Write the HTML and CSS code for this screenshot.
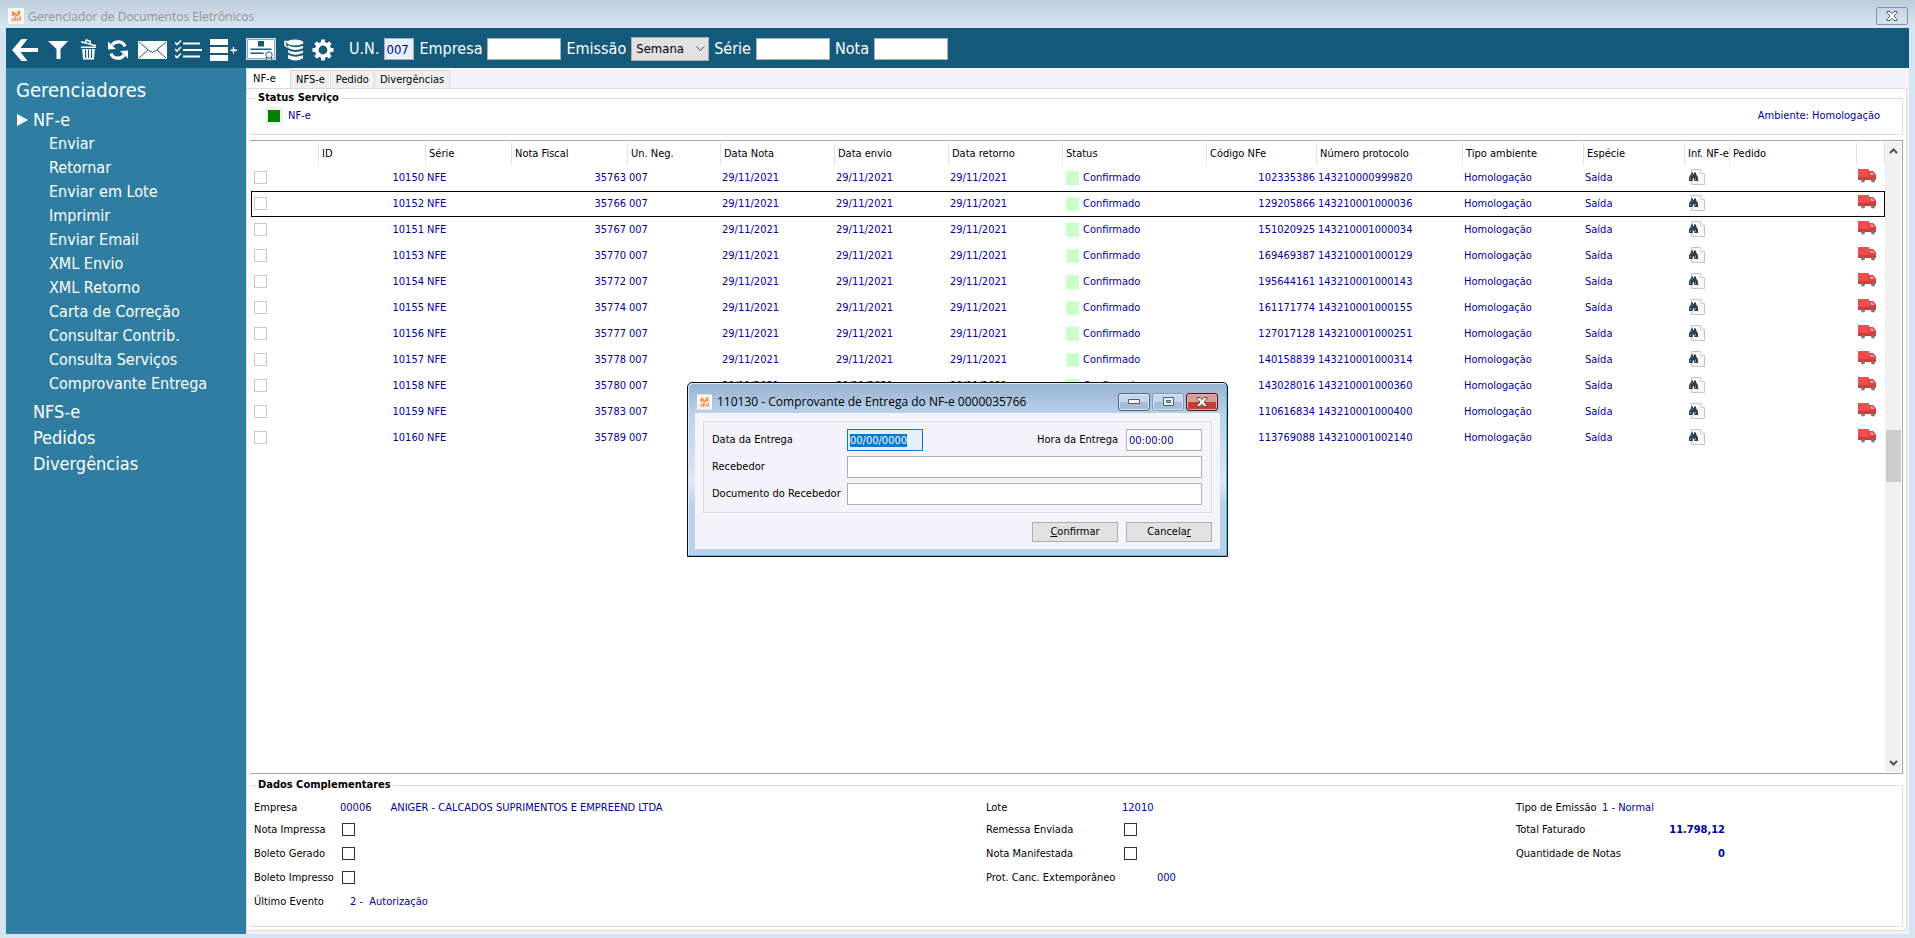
FILE: index.html
```html
<!DOCTYPE html>
<html lang="pt-BR">
<head>
<meta charset="utf-8">
<title>Gerenciador de Documentos Eletrônicos</title>
<link rel="stylesheet" href="styles.css">
</head>
<body>
<svg class="defs" aria-hidden="true">
  <symbol id="logo" viewBox="0 0 16 16"><rect width="16" height="16" fill="#fdf7f2"/><path d="M4 3.500l3 2.500M9 5.500l3-2.500M4 8l3-2 2 1.500 3-2M4.500 13V10.500M7 13V9.500l1.500-1M9.500 13V10M12 13V8.500M4 6l1.500-1M10 3.500l1.500 1.500" stroke="#f0762e" stroke-width="1.300" fill="none"/></symbol>
  <symbol id="doc" viewBox="0 0 17 17"><path d="M2.500 .5h9l4 4v11h-13z" fill="#f8f8fa" stroke="#c4c4c4"/><path d="M11.500 .5v4h4" fill="#fff" stroke="#d2d2d2"/><path d="M2 3.500h2v1.500h1V3.500h2V5l2 3.500V12H5.300V9.500h-1.600V12H0V8.500L2 5z" fill="#2d3a48"/><path d="M1.500 8.500v2.500M6.500 8.500v2.500M3 5v2" stroke="#7f93a6" stroke-width=".8"/></symbol>
  <symbol id="truck" viewBox="0 0 18 14"><path d="M0 0h11v9H0z" fill="#f04d4d"/><path d="M0 8h18v3H0z" fill="#cf3b3b"/><path d="M11 2h4l3 3.500V9h-7z" fill="#dc4040"/><path d="M12.500 3.500h2l1.800 2.500h-3.800z" fill="#f3a9a9"/><circle cx="5" cy="11.500" r="2" fill="#777"/><circle cx="15" cy="11.500" r="2" fill="#777"/></symbol>
</svg>

<header class="titlebar">
  <svg class="logo"><use href="#logo"/></svg>
  <h1>Gerenciador de Documentos Eletrônicos</h1>
  <button class="close-main" aria-label="Fechar"><svg width="12" height="10" viewBox="0 0 12 10"><path d="M1 .5h3l2 2.200 2-2.200h3v1L8 5l3 3.500v1H8L6 7.300 4 9.500H1v-1L4 5 1 1.500z" fill="#fff" stroke="#535a68"/></svg></button>
</header>

<div class="frame">
  <nav class="toolbar" aria-label="Ferramentas">
    <div class="tools">
      <button aria-label="Voltar"><svg width="26" height="22" viewBox="0 0 26 22"><path d="M9.500 0h6L8.500 9H26v4H8.500l7 9h-6L0 11z"/></svg></button>
      <button aria-label="Filtrar"><svg width="20" height="22" viewBox="0 0 20 22"><path d="M0 2h20l-7.500 8v10h-4V10z"/></svg></button>
      <button aria-label="Excluir"><svg width="20" height="22" viewBox="0 0 20 22"><path d="M3 7.500h15V9H3zM4.200 10h12.600l-.8 10.500H5z"/><path d="M3 2.800l15 4M7.500 3.500l.8-2.500 4 1.200-.5 2.500" fill="none" stroke="#fff" stroke-width="1.500"/><path d="M7.500 10.500v8.500M10.500 10.500v8.500M13.500 10.500v8.500" stroke="#145a7b" stroke-width="1.200"/></svg></button>
      <button aria-label="Atualizar"><svg width="20" height="22" viewBox="0 0 20 22"><path d="M17 7.500C15 1.500 7 1.500 4 6M3 14.500c2 6 10 6 13 1.500" fill="none" stroke="#fff" stroke-width="3.200"/><path d="M0 2.500v8l8-.5zM20 19.500v-8l-8 .5z"/></svg></button>
      <button aria-label="Enviar e-mail"><svg width="29" height="22" viewBox="0 0 29 22"><path d="M0 2h29v18H0z"/><path d="M1 3l10.500 9q3 2.500 6 0L28 3M1 19l9-8M28 19l-9-8" fill="none" stroke="#145a7b"/></svg></button>
    </div>
    <div class="tools narrow">
      <button aria-label="Conferir"><svg width="27" height="22" viewBox="0 0 27 22"><path d="M8 3.500h17v2H8zM8 10h19v2H8zM8 16.500h17v2H8z"/><path d="M0 3.500l2 2 4-4M0 10l2 2 4-4M0 16.500l2 2 4-4" fill="none" stroke="#fff" stroke-width="1.600"/></svg></button>
      <button aria-label="Adicionar"><svg width="28" height="22" viewBox="0 0 28 22"><path d="M0 0h18v6H0zM0 8h18v6H0zM0 16h18v6H0z"/><path d="M23.500 8v6.500M20.500 11.200h6.500" stroke="#fff" stroke-width="1.400"/></svg></button>
      <button aria-label="Certificado"><svg width="30" height="24" viewBox="0 0 30 24"><path d="M0 0h30v22H0z" fill="#d3e0e7"/><path d="M1.500 1.500h27v19h-27z" fill="#fff" stroke="#88aabc"/><path d="M12 3h6v5.500h-6zM4.500 10.500h21V12h-21zM4.500 14.500h13V16h-13z" fill="#145a7b"/><path d="M21 19l-.5 4.500 2.500-1.500 2.500 1.500-.5-4.500" fill="#fff" stroke="#145a7b"/><circle cx="23" cy="17" r="3.200" fill="#fff" stroke="#145a7b"/></svg></button>
      <button aria-label="Banco de dados"><svg width="20" height="22" viewBox="0 0 20 22"><ellipse cx="11" cy="3.500" rx="8.500" ry="3"/><path d="M4 6.200q7 3.600 15 .5v2.500q-7.500 3.500-14.500 0zM4 11q7 3.600 15 .5V14q-7.500 3.500-14.500 0zM4 15.800q7 3.600 15 .5v3q-7.500 4.500-15 0z"/><path d="M3.500 2.500H1v3.500l2.500 2.500" fill="none" stroke="#fff" stroke-width="1.600"/></svg></button>
      <button aria-label="Configurações"><svg width="22" height="22" viewBox="0 0 22 22"><circle cx="11" cy="11" r="6.200" fill="none" stroke="#fff" stroke-width="3.600"/><path d="M11 .5v4M11 17.500v4M.5 11h4M17.500 11h4M3.600 3.600l3 3M15.400 15.400l3 3M3.600 18.400l3-3M15.400 6.600l3-3" stroke="#fff" stroke-width="3.800"/></svg></button>
    </div>
    <form class="filters">
      <label for="un">U.N.</label><input id="un" class="un" value="007">
      <label for="empresa">Empresa</label><input id="empresa">
      <label for="emissao">Emissão</label>
      <span class="combo"><select id="emissao"><option>Semana</option></select><svg width="9" height="6" viewBox="0 0 9 6"><path d="M.5 .5l4 4 4-4" fill="none" stroke="#555"/></svg></span>
      <label for="serie">Série</label><input id="serie">
      <label for="nota">Nota</label><input id="nota">
    </form>
  </nav>

  <div class="body">
    <aside class="sidebar">
      <h2>Gerenciadores</h2>
      <ul class="menu">
        <li><a class="open" href="#">NF-e</a>
          <ul class="submenu">
            <li><a href="#">Enviar</a></li>
            <li><a href="#">Retornar</a></li>
            <li><a href="#">Enviar em Lote</a></li>
            <li><a href="#">Imprimir</a></li>
            <li><a href="#">Enviar Email</a></li>
            <li><a href="#">XML Envio</a></li>
            <li><a href="#">XML Retorno</a></li>
            <li><a href="#">Carta de Correção</a></li>
            <li><a href="#">Consultar Contrib.</a></li>
            <li><a href="#">Consulta Serviços</a></li>
            <li><a href="#">Comprovante Entrega</a></li>
          </ul>
        </li>
        <li><a href="#">NFS-e</a></li>
        <li><a href="#">Pedidos</a></li>
        <li><a href="#">Divergências</a></li>
      </ul>
    </aside>

    <main class="content">
      <div class="tabs" role="tablist">
        <button role="tab" aria-selected="true" class="active">NF-e</button><button role="tab">NFS-e</button><button role="tab">Pedido</button><button role="tab">Divergências</button>
      </div>
      <div class="page">
        <fieldset class="status">
          <legend>Status Serviço</legend>
          <div class="status-row"><span class="led"></span><span>NF-e</span><span class="env">Ambiente: Homologação</span></div>
        </fieldset>

        <div class="grid">
          <div class="grid-view">
            <table>
              <colgroup><col class="w68"><col class="w107"><col class="w86"><col class="w116"><col class="w93"><col class="w114"><col class="w114"><col class="w114"><col class="w144"><col class="w110"><col class="w146"><col class="w121"><col class="w101"><col class="w45"><col><col class="w28"></colgroup>
              <thead><tr><th></th><th>ID</th><th>Série</th><th>Nota Fiscal</th><th>Un. Neg.</th><th>Data Nota</th><th>Data envio</th><th>Data retorno</th><th>Status</th><th>Código NFe</th><th>Número protocolo</th><th>Tipo ambiente</th><th>Espécie</th><th>Inf. NF-e</th><th>Pedido</th><th></th></tr></thead>
              <tbody>
                <tr><td><input type="checkbox" aria-label="Nota 35763"></td><td class="num">10150</td><td>NFE</td><td class="num">35763</td><td>007</td><td>29/11/2021</td><td>29/11/2021</td><td>29/11/2021</td><td class="ok">Confirmado</td><td class="num">102335386</td><td>143210000999820</td><td>Homologação</td><td>Saída</td><td><svg class="doc"><use href="#doc"/></svg></td><td></td><td><svg class="truck"><use href="#truck"/></svg></td></tr>
                <tr class="selected"><td><input type="checkbox" aria-label="Nota 35766"></td><td class="num">10152</td><td>NFE</td><td class="num">35766</td><td>007</td><td>29/11/2021</td><td>29/11/2021</td><td>29/11/2021</td><td class="ok">Confirmado</td><td class="num">129205866</td><td>143210001000036</td><td>Homologação</td><td>Saída</td><td><svg class="doc"><use href="#doc"/></svg></td><td></td><td><svg class="truck"><use href="#truck"/></svg></td></tr>
                <tr><td><input type="checkbox" aria-label="Nota 35767"></td><td class="num">10151</td><td>NFE</td><td class="num">35767</td><td>007</td><td>29/11/2021</td><td>29/11/2021</td><td>29/11/2021</td><td class="ok">Confirmado</td><td class="num">151020925</td><td>143210001000034</td><td>Homologação</td><td>Saída</td><td><svg class="doc"><use href="#doc"/></svg></td><td></td><td><svg class="truck"><use href="#truck"/></svg></td></tr>
                <tr><td><input type="checkbox" aria-label="Nota 35770"></td><td class="num">10153</td><td>NFE</td><td class="num">35770</td><td>007</td><td>29/11/2021</td><td>29/11/2021</td><td>29/11/2021</td><td class="ok">Confirmado</td><td class="num">169469387</td><td>143210001000129</td><td>Homologação</td><td>Saída</td><td><svg class="doc"><use href="#doc"/></svg></td><td></td><td><svg class="truck"><use href="#truck"/></svg></td></tr>
                <tr><td><input type="checkbox" aria-label="Nota 35772"></td><td class="num">10154</td><td>NFE</td><td class="num">35772</td><td>007</td><td>29/11/2021</td><td>29/11/2021</td><td>29/11/2021</td><td class="ok">Confirmado</td><td class="num">195644161</td><td>143210001000143</td><td>Homologação</td><td>Saída</td><td><svg class="doc"><use href="#doc"/></svg></td><td></td><td><svg class="truck"><use href="#truck"/></svg></td></tr>
                <tr><td><input type="checkbox" aria-label="Nota 35774"></td><td class="num">10155</td><td>NFE</td><td class="num">35774</td><td>007</td><td>29/11/2021</td><td>29/11/2021</td><td>29/11/2021</td><td class="ok">Confirmado</td><td class="num">161171774</td><td>143210001000155</td><td>Homologação</td><td>Saída</td><td><svg class="doc"><use href="#doc"/></svg></td><td></td><td><svg class="truck"><use href="#truck"/></svg></td></tr>
                <tr><td><input type="checkbox" aria-label="Nota 35777"></td><td class="num">10156</td><td>NFE</td><td class="num">35777</td><td>007</td><td>29/11/2021</td><td>29/11/2021</td><td>29/11/2021</td><td class="ok">Confirmado</td><td class="num">127017128</td><td>143210001000251</td><td>Homologação</td><td>Saída</td><td><svg class="doc"><use href="#doc"/></svg></td><td></td><td><svg class="truck"><use href="#truck"/></svg></td></tr>
                <tr><td><input type="checkbox" aria-label="Nota 35778"></td><td class="num">10157</td><td>NFE</td><td class="num">35778</td><td>007</td><td>29/11/2021</td><td>29/11/2021</td><td>29/11/2021</td><td class="ok">Confirmado</td><td class="num">140158839</td><td>143210001000314</td><td>Homologação</td><td>Saída</td><td><svg class="doc"><use href="#doc"/></svg></td><td></td><td><svg class="truck"><use href="#truck"/></svg></td></tr>
                <tr><td><input type="checkbox" aria-label="Nota 35780"></td><td class="num">10158</td><td>NFE</td><td class="num">35780</td><td>007</td><td>29/11/2021</td><td>29/11/2021</td><td>29/11/2021</td><td class="ok">Confirmado</td><td class="num">143028016</td><td>143210001000360</td><td>Homologação</td><td>Saída</td><td><svg class="doc"><use href="#doc"/></svg></td><td></td><td><svg class="truck"><use href="#truck"/></svg></td></tr>
                <tr><td><input type="checkbox" aria-label="Nota 35783"></td><td class="num">10159</td><td>NFE</td><td class="num">35783</td><td>007</td><td>29/11/2021</td><td>29/11/2021</td><td>29/11/2021</td><td class="ok">Confirmado</td><td class="num">110616834</td><td>143210001000400</td><td>Homologação</td><td>Saída</td><td><svg class="doc"><use href="#doc"/></svg></td><td></td><td><svg class="truck"><use href="#truck"/></svg></td></tr>
                <tr><td><input type="checkbox" aria-label="Nota 35789"></td><td class="num">10160</td><td>NFE</td><td class="num">35789</td><td>007</td><td>29/11/2021</td><td>29/11/2021</td><td>29/11/2021</td><td class="ok">Confirmado</td><td class="num">113769088</td><td>143210001002140</td><td>Homologação</td><td>Saída</td><td><svg class="doc"><use href="#doc"/></svg></td><td></td><td><svg class="truck"><use href="#truck"/></svg></td></tr>
              </tbody>
            </table>
          </div>
          <div class="scrollbar" aria-hidden="true">
            <svg width="9" height="6" viewBox="0 0 9 6"><path d="M1 5l3.500-3.500L8 5" fill="none" stroke="#505050" stroke-width="2"/></svg>
            <div class="track"><div class="before"></div><div class="thumb"></div><div class="after"></div></div>
            <svg width="9" height="6" viewBox="0 0 9 6"><path d="M1 1l3.500 3.500L8 1" fill="none" stroke="#505050" stroke-width="2"/></svg>
          </div>
        </div>

        <fieldset class="details">
          <legend>Dados Complementares</legend>
          <div class="details-cols">
            <div class="col a">
              <span>Empresa</span><span class="val company"><span>00006</span><span>ANIGER - CALCADOS SUPRIMENTOS E EMPREEND LTDA</span></span>
              <label for="ni">Nota Impressa</label><input type="checkbox" id="ni">
              <label for="bg">Boleto Gerado</label><input type="checkbox" id="bg">
              <label for="bi">Boleto Impresso</label><input type="checkbox" id="bi">
              <span>Último Evento</span><span class="val event">2 - &nbsp;Autorização</span>
            </div>
            <div class="col b">
              <span>Lote</span><span class="val">12010</span>
              <label for="re">Remessa Enviada</label><input type="checkbox" id="re">
              <label for="nm">Nota Manifestada</label><input type="checkbox" id="nm">
              <span>Prot. Canc. Extemporâneo</span><span class="val protocol">000</span>
            </div>
            <div class="col c">
              <span>Tipo de Emissão</span><span class="val">1 - Normal</span>
              <span>Total Faturado</span><b class="val">11.798,12</b>
              <span>Quantidade de Notas</span><b class="val">0</b>
            </div>
          </div>
        </fieldset>
      </div>
    </main>
  </div>
</div>

<section class="dialog" role="dialog" aria-labelledby="dlg-title">
  <header class="dlg-head">
    <svg class="dlg-logo"><use href="#logo"/></svg>
    <h2 id="dlg-title">110130 - Comprovante de Entrega do NF-e 0000035766</h2>
    <div class="dlg-buttons">
      <button aria-label="Minimizar"><svg width="12" height="5" viewBox="0 0 12 5"><path d="M.5 .5h11v4H.5z" fill="#fff" stroke="#535a68"/></svg></button>
      <button class="dim" aria-label="Maximizar"><svg width="11" height="9" viewBox="0 0 11 9"><path d="M.5 .5h10v8H.5z" fill="#eef3f8" stroke="#535a68"/><path d="M3.500 3.500h4v2h-4z" fill="#b9cbe0" stroke="#535a68"/></svg></button>
      <button class="dlg-close" aria-label="Fechar"><svg width="12" height="10" viewBox="0 0 12 10"><path d="M1 .5h3l2 2.200 2-2.200h3v1L8 5l3 3.500v1H8L6 7.300 4 9.500H1v-1L4 5 1 1.500z" fill="#fff" stroke="#53454c"/></svg></button>
    </div>
  </header>
  <form class="dlg-body">
    <div class="dlg-fields">
      <label for="data">Data da Entrega</label>
      <div class="pair"><input id="data" class="short" value="00/00/0000"><label for="hora">Hora da Entrega</label><input id="hora" class="short" value="00:00:00"></div>
      <label for="receb">Recebedor</label><input id="receb">
      <label for="doc-receb">Documento do Recebedor</label><input id="doc-receb">
    </div>
    <div class="dlg-actions"><button type="button"><u>C</u>onfirmar</button><button type="button">Cancela<u>r</u></button></div>
  </form>
</section>
<script src="app.js"></script>
</body>
</html>
```

FILE: app.js
```js
const dateField = document.getElementById('data');
dateField.focus();
dateField.select();
```

FILE: styles.css
```css
* { box-sizing: border-box; }
body {
  margin: 0;
  height: 100vh;
  display: flex;
  flex-direction: column;
  background: #d6e4f1;
  font-family: "DejaVu Sans Condensed", "Noto Sans", sans-serif;
  font-size: 11px;
  line-height: 16px;
  color: #000;
}
button, input, select { font: inherit; color: inherit; margin: 0; padding: 0; border: 0; border-radius: 0; }
button { display: flex; align-items: center; justify-content: center; background: none; }
h1, h2, ul { margin: 0; padding: 0; font-weight: normal; list-style: none; }
a { color: inherit; text-decoration: none; }
svg { display: block; }
.defs { position: absolute; width: 0; height: 0; }

/* window title */
.titlebar {
  display: flex;
  align-items: center;
  height: 28px;
  padding: 4px 7px 0 8px;
  background: linear-gradient(#bfcdda, #d8e5f2);
}
.logo { width: 16px; height: 16px; }
.titlebar h1 { flex: 1; margin-left: 4px; padding-top: 2px; font: 12px/16px "Noto Sans", sans-serif; font-family: "Open Sans", sans-serif; color: #919496; }
.close-main { width: 32px; height: 18px; border: 1px solid #8592ad; border-radius: 2px; }

.frame { flex: 1; min-height: 0; display: flex; flex-direction: column; margin: 0 6px 4px; }

/* toolbar */
.toolbar { display: flex; align-items: center; height: 40px; padding: 4px 6px 0; background: #145a7b; color: #fff; }
.tools { display: flex; align-items: center; gap: 10px; margin-right: 8px; }
.tools.narrow { gap: 8px; margin-right: 10px; }
.tools svg { fill: #fff; }
.filters { display: flex; align-items: center; font-size: 16px; padding-bottom: 2px; }
.filters label { margin: 0 5px; }
.filters input { width: 74px; height: 22px; border: 1px solid #abadb3; background: #fff; }
.filters input.un { width: 30px; background: #e8f0fe; color: #0000a0; font-size: 13px; padding-left: 1px; }
.combo { display: grid; width: 78px; height: 24px; align-items: center; }
.combo select, .combo svg { grid-area: 1 / 1; }
.combo select { appearance: none; width: 100%; height: 24px; padding-left: 4px; background: #e1e1e1; border: 1px solid #adadad; color: #000; font-size: 13px; }
.combo svg { justify-self: end; margin-right: 4px; pointer-events: none; }

.body { flex: 1; min-height: 0; display: flex; }

/* sidebar */
.sidebar { width: 240px; background: #2f7ea2; color: #fff; padding: 8px 10px; }
.sidebar h2 { font-size: 20px; line-height: 28px; }
.menu { padding-top: 3px; font-size: 18px; line-height: 26px; }
.menu > li > a { display: block; padding-left: 17px; }
.menu > li > a.open { display: flex; align-items: center; padding-left: 1px; }
.open::before { content: ""; border: solid transparent; border-width: 6px 0 6px 11px; border-left-color: #fff; margin-right: 5px; }
.submenu { font-size: 16px; line-height: 24px; padding: 0 0 3px 33px; margin-top: -1px; }

/* content */
.content { flex: 1; min-width: 0; display: flex; flex-direction: column; background: #f3f3f9; padding: 0 2px 3px 0; }
.tabs { display: flex; align-items: flex-end; height: 20px; }
.tabs button { height: 18px; padding: 1px 5px 0; border: 1px solid #d9d9d9; border-width: 1px 1px 0 0; background: #f0f0f0; }
.tabs button.active { width: 45px; height: 21px; margin-bottom: -1px; padding: 0 0 1px 6px; justify-content: flex-start; background: #fff; border-left-width: 1px; }
.page { flex: 1; min-height: 0; display: flex; flex-direction: column; padding: 2px 3px 3px; background: #fff; border: 1px solid #dcdcdc; }
fieldset { margin: 0; padding: 0; border: 1px solid #dcdcdc; border-left: 0; min-width: 0; }
legend { margin-left: 6px; padding: 0 2px; line-height: 14px; font-weight: bold; }
.status { height: 44px; }
.status-row { display: flex; align-items: center; padding: 2px 22px 0 15px; color: #0000a0; }
.led { width: 18px; height: 18px; margin-right: 5px; background: #008000; border: 3px solid #f0f0f0; }
.env { margin-left: auto; }

/* documents grid */
.grid { flex: 1; min-height: 0; display: flex; margin-top: 5px; padding: 1px; border: 1px solid #a6a6aa; border-left: 0; }
.grid-view { flex: 1; min-width: 0; overflow: hidden; }
table { width: 100%; table-layout: fixed; border-collapse: separate; border-spacing: 0; }
.w28 { width: 28px; } .w45 { width: 45px; } .w68 { width: 68px; } .w86 { width: 86px; }
.w93 { width: 93px; } .w101 { width: 101px; } .w107 { width: 107px; } .w110 { width: 110px; }
.w114 { width: 114px; } .w116 { width: 116px; } .w121 { width: 121px; } .w144 { width: 144px; } .w146 { width: 146px; }
th { height: 23px; padding: 0 0 0 3px; border-right: 1px solid #e3e3e3; font-weight: normal; text-align: left; white-space: nowrap; }
td { height: 26px; padding: 0 2px 0 1px; border: solid transparent; border-width: 1px 0; color: #0000a0; white-space: nowrap; }
td:first-child { border-left-width: 1px; }
td:last-child { border-right-width: 1px; }
.selected td { border-color: #000; }
.num { text-align: right; }
input[type=checkbox] { appearance: none; display: block; width: 13px; height: 13px; background: #fff; border: 1px solid #333; }
td input[type=checkbox] { border-color: #c8c8c8; margin: 0 0 1px 1px; }
.ok::before { content: ""; display: inline-block; width: 13px; height: 14px; margin: 0 4px 0 2px; background: #ccffcc; vertical-align: middle; }
.doc { width: 17px; height: 17px; margin: 0 0 2px 3px; }
.truck { width: 18px; height: 14px; margin-bottom: 4px; }
.scrollbar { width: 16px; display: flex; flex-direction: column; align-items: center; padding: 6px 0; background: #f0f0f0; }
.track { flex: 1; width: 15px; display: flex; flex-direction: column; margin: 4px 0; }
.before { flex: 272; }
.thumb { height: 52px; background: #cdcdcd; }
.after { flex: 275; }

/* complementary data */
.details { margin-top: 4px; height: 149px; }
.details-cols { display: grid; grid-template-columns: 732fr 530fr 386fr; padding: 6px 0 0 4px; }
.col { display: grid; grid-auto-rows: 24px; grid-template-rows: 20px; align-content: start; align-items: center; white-space: nowrap; }
.col.a { grid-template-columns: 86px auto; }
.col.b { grid-template-columns: 136px auto; }
.col.c { grid-template-columns: 86px 123px; justify-content: start; }
.col.a, .col.b { justify-content: start; }
.col input { margin: 0 0 1px 2px; }
.val { color: #0000a0; }
.col b { text-align: right; }
.company { display: flex; gap: 19px; }
.event { padding-left: 10px; }
.protocol { padding-left: 35px; }

/* dialog over the grid */
.dialog {
  position: absolute;
  left: 687px;
  top: 382px;
  width: 541px;
  border: 1px solid #111;
  border-radius: 5px 5px 0 0;
  padding: 0 7px 7px;
  background: linear-gradient(#97b2cf, #b9d1ea 30px, #dce8f4 100px, #b9d1ea 122px);
  box-shadow: inset -1px -1px #45c8e0, inset 1px 1px #dceaf7;
}
.dlg-head { display: flex; align-items: center; height: 30px; padding: 7px 2px 0; }
.dlg-logo { width: 15px; height: 16px; }
.dlg-head h2 { flex: 1; margin-left: 5px; font: 12px/16px "Open Sans", sans-serif; }
.dlg-buttons { display: flex; gap: 2px; }
.dlg-buttons button { width: 32px; height: 18px; border: 1px solid #4d6480; border-radius: 3px; background: linear-gradient(#c5d7ea 50%, #a4bdd8 50%); box-shadow: inset 0 0 0 1px #dce8f4; }
.dlg-buttons .dim { border-color: #7d97b8; }
.dlg-buttons .dlg-close { border-color: #471019; background: linear-gradient(#dc9a90 50%, #bd4030 50%); box-shadow: inset 0 0 0 1px #e8b0a8; }
.dlg-body { background: #f3f3f9; padding: 8px 8px 7px; }
.dlg-fields { display: grid; grid-template-columns: 135px 1fr; row-gap: 5px; align-items: center; padding: 7px 9px 7px 8px; border: 1px solid #dcdcdc; white-space: nowrap; }
.dlg-fields input { width: 100%; height: 22px; padding: 0 2px; background: #fff; border: 1px solid #abadb3; color: #0000a0; }
.pair { display: flex; align-items: center; }
.pair label { margin: 0 8px 0 auto; }
.dlg-fields .short { width: 76px; }
.dlg-fields input:focus { outline: 0; border-color: #0078d7; background: #e5f1fb; }
input::selection { background: #0078d7; color: #fff; }
.dlg-actions { display: flex; justify-content: flex-end; gap: 8px; margin-top: 9px; }
.dlg-actions button { width: 86px; height: 20px; background: #e1e1e1; border: 1px solid #adadad; }
```
